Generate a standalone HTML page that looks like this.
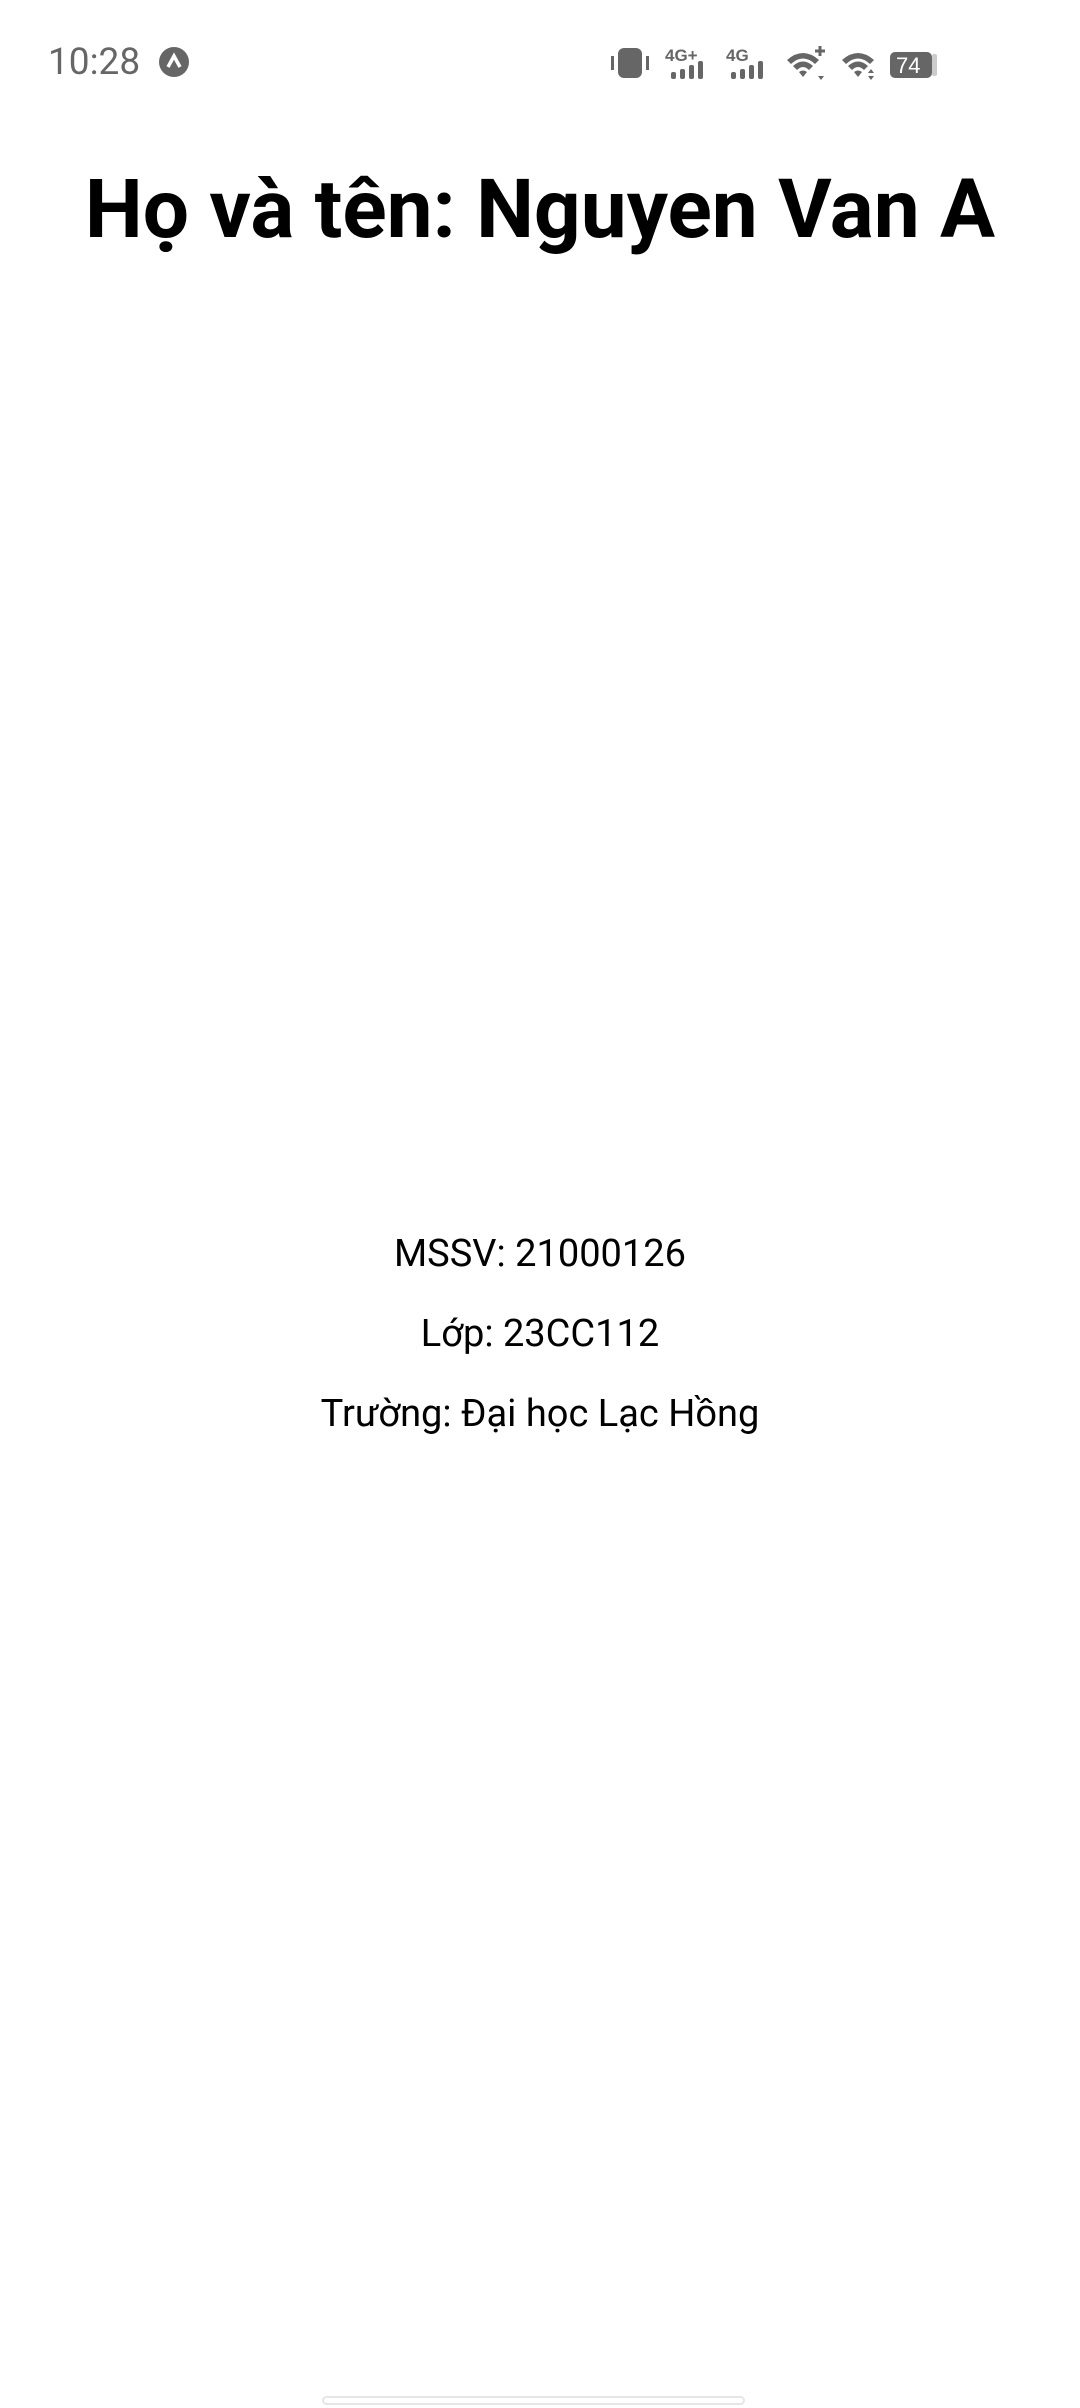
<!DOCTYPE html>
<html><head><meta charset="utf-8"><style>
html,body{margin:0;padding:0;background:#fff;width:1080px;height:2408px;overflow:hidden;position:relative;font-family:"Roboto","Liberation Sans",sans-serif}
.abs{position:absolute}
.time{left:48px;top:44px;font-size:37px;color:#666;line-height:1}
.title{left:0;width:1080px;top:169px;text-align:center;font-size:82px;font-weight:bold;color:#000;line-height:1}
.info{left:0;width:1080px;text-align:center;font-size:38px;color:#000;line-height:1}
</style></head><body>
<div class="abs time">10:28</div>
<svg class="abs" style="left:158px;top:46px" width="32" height="32" viewBox="0 0 32 32"><circle cx="16" cy="16" r="15" fill="#666"/><path d="M10 21 L16 10 L22 21" stroke="#fff" stroke-width="3.5" fill="none"/></svg>
<svg class="abs" style="left:606px;top:40px" width="340" height="50" viewBox="0 0 340 50">
<g fill="#666">
<rect x="12" y="8" width="24" height="30" rx="6"/><rect x="5" y="16" width="3" height="14"/><rect x="40" y="16" width="3" height="14"/>
<text x="59" y="21" font-family="Liberation Sans" font-weight="bold" font-size="17">4G+</text>
<rect x="65" y="32" width="5" height="7" rx="2"/><rect x="74" y="29" width="5" height="10" rx="2"/><rect x="83" y="25" width="5" height="14" rx="2"/><rect x="92" y="21" width="5" height="18" rx="2"/>
<text x="120" y="21" font-family="Liberation Sans" font-weight="bold" font-size="17">4G</text>
<rect x="125" y="32" width="5" height="7" rx="2"/><rect x="134" y="29" width="5" height="10" rx="2"/><rect x="143" y="25" width="5" height="14" rx="2"/><rect x="152" y="21" width="5" height="18" rx="2"/>
<path d="M181 20 Q197 6 213 20 L209 24 Q197 13 185 24Z M187 26 Q197 17 207 26 L203 30 Q197 24 191 30Z M193 32 L197 37 L201 32 Q197 29 193 32Z"/>
<path d="M209 11 h10 M214 6 v10" stroke="#666" stroke-width="3"/><path d="M212 36 l3 4 l3 -4z"/>
<path d="M236 20 Q252 6 268 20 L264 24 Q252 13 240 24Z M242 26 Q252 17 262 26 L258 30 Q252 24 246 30Z M248 32 L252 37 L256 32 Q252 29 248 32Z"/>
<path d="M262 33 l3 -4 l3 4z M262 36 l3 4 l3 -4z"/>
<rect x="284" y="12" width="42" height="26" rx="5"/><rect x="326" y="14" width="5" height="22" rx="2" fill="#ccc"/>
<text x="290" y="33" font-family="Liberation Sans" font-size="22" fill="#fff">74</text>
</g></svg>
<div class="abs title">Họ và tên: Nguyen Van A</div>
<div class="abs info" style="top:1235px">MSSV: 21000126</div>
<div class="abs info" style="top:1315px">Lớp: 23CC112</div>
<div class="abs info" style="top:1395px">Trường: Đại học Lạc Hồng</div>
<div class="abs" style="left:322px;top:2396px;width:423px;height:9px;border:2px solid #e6e6e6;border-radius:6px;box-sizing:border-box"></div>
</body></html>
